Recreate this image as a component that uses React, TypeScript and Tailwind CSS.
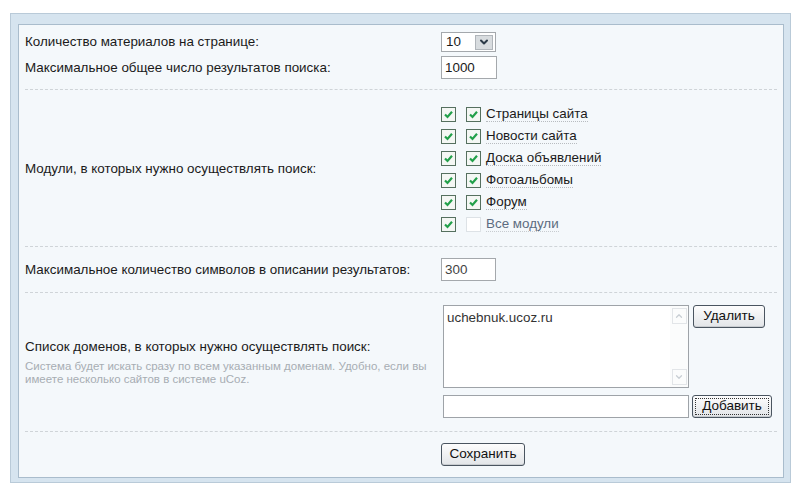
import { ChevronDown, ChevronUp } from "lucide-react"

const modules = [
  { name: "Страницы сайта", on: true },
  { name: "Новости сайта", on: true },
  { name: "Доска объявлений", on: true },
  { name: "Фотоальбомы", on: true },
  { name: "Форум", on: true },
]

function Box({ on, faint }: { on: boolean; faint?: boolean }) {
  return (
    <span
      className={
        faint
          ? "flex h-[15px] w-[15px] items-center justify-center border border-[#dde2e6] bg-white"
          : "flex h-[15px] w-[15px] items-center justify-center border border-[#55705f] bg-[#f4f7f4]"
      }
    >
      {on && (
        <svg width="11" height="11" viewBox="0 0 11 11">
          <path d="M2 5.5 L4.5 8 L9 2.8" fill="none" stroke="#22a04a" strokeWidth="2.2" />
        </svg>
      )}
    </span>
  )
}

function Btn({ children, focus, w }: { children: string; focus?: boolean; w: string }) {
  return (
    <button
      className={`${w} h-[23px] rounded-[3px] border border-[#4a5560] bg-gradient-to-b from-[#fdfdfd] to-[#e2e5e8] p-[2px] text-[13.5px] text-[#111] shadow-[inset_0_-1px_0_#c8ccd0]`}
    >
      <span
        className={
          focus
            ? "flex h-full items-center justify-center border border-dotted border-[#333]"
            : "flex h-full items-center justify-center"
        }
      >
        {children}
      </span>
    </button>
  )
}

export default function App() {
  return (
    <div className="h-[491px] w-[800px] bg-white pl-[10px] pt-[13px] font-['Liberation_Sans',Arial,sans-serif] text-[13.4px] text-[#1a1a1a]">
      <div className="w-[781px] border border-[#b9cad8] bg-[#d6e4ef] pb-[4px] pl-[7px] pr-[6px] pt-[10px]">
        <div className="border border-[#a9bccc] bg-[#f4f8fb] px-[6px]">
          {/* counts */}
          <div className="flex flex-col gap-[4px] border-b border-dashed border-[#cfd4d8] pb-[10px] pt-[7px]">
            <div className="flex items-center">
              <div className="w-[416px]">Количество материалов на странице:</div>
              <div className="flex h-[20px] w-[55px] items-center border border-[#a4a8ac] bg-white pl-[4px]">
                <span className="flex-1">10</span>
                <span className="mr-[2px] flex h-[15px] w-[18px] items-center justify-center border border-[#b0b5ba] bg-[#d8dcdf]">
                  <ChevronDown size={12} strokeWidth={4} color="#2c3a48" />
                </span>
              </div>
            </div>
            <div className="flex items-center">
              <div className="w-[416px]">Максимальное общее число результатов поиска:</div>
              <div className="flex h-[23px] w-[56px] items-center border border-[#a4a8ac] bg-white pl-[3px]">1000</div>
            </div>
          </div>

          {/* modules */}
          <div className="flex items-center border-b border-dashed border-[#cfd4d8] pb-[11px] pt-[13px]">
            <div className="w-[416px]">Модули, в которых нужно осуществлять поиск:</div>
            <div className="flex flex-col">
              {modules.map((m) => (
                <div key={m.name} className="flex h-[22px] items-center">
                  <Box on />
                  <span className="ml-[10px]">
                    <Box on={m.on} />
                  </span>
                  <span className="ml-[5px] border-b border-dotted border-[#b8bcc0] leading-[15px]">{m.name}</span>
                </div>
              ))}
              <div className="flex h-[22px] items-center">
                <Box on />
                <span className="ml-[10px]">
                  <Box on={false} faint />
                </span>
                <span className="ml-[5px] border-b border-dotted border-[#c8ccd0] leading-[15px] text-[#5c6c80]">Все модули</span>
              </div>
            </div>
          </div>

          {/* chars */}
          <div className="flex items-center border-b border-dashed border-[#cfd4d8] py-[11px]">
            <div className="w-[416px]">Максимальное количество символов в описании результатов:</div>
            <div className="flex h-[23px] w-[55px] items-center border border-[#a4a8ac] bg-white pl-[3px] text-[#444]">300</div>
          </div>

          {/* domains */}
          <div className="flex items-center border-b border-dashed border-[#cfd4d8] pb-[13px] pt-[12px]">
            <div className="w-[418px]">
              <div>Список доменов, в которых нужно осуществлять поиск:</div>
              <div className="mt-[3px] text-[11.5px] leading-[13px] text-[#a7adb3]">
                Система будет искать сразу по всем указанным доменам. Удобно, если вы
                <br />
                имеете несколько сайтов в системе uCoz.
              </div>
            </div>
            <div className="flex flex-col gap-[7px]">
              <div className="flex items-start gap-[4px]">
                <div className="flex h-[83px] w-[246px] border border-[#9ea3a8] bg-white">
                  <div className="flex-1 pl-[3px] pt-[2px] text-[#333]">uchebnuk.ucoz.ru</div>
                  <div className="flex w-[18px] flex-col justify-between bg-[#fbfcfc] py-[2px]">
                    <span className="mx-auto flex h-[16px] w-[15px] items-center justify-center border border-[#e2e5e8]">
                      <ChevronUp size={10} strokeWidth={3} color="#c8ced4" />
                    </span>
                    <span className="mx-auto flex h-[16px] w-[15px] items-center justify-center border border-[#e2e5e8]">
                      <ChevronDown size={10} strokeWidth={3} color="#c8ced4" />
                    </span>
                  </div>
                </div>
                <Btn w="w-[72px]">Удалить</Btn>
              </div>
              <div className="flex items-center gap-[3px]">
                <div className="h-[23px] w-[246px] border border-[#9ea3a8] bg-white" />
                <Btn w="w-[80px]" focus>
                  Добавить
                </Btn>
              </div>
            </div>
          </div>

          {/* save */}
          <div className="flex py-[11px] pl-[416px]">
            <Btn w="w-[84px]">Сохранить</Btn>
          </div>
        </div>
      </div>
    </div>
  )
}
